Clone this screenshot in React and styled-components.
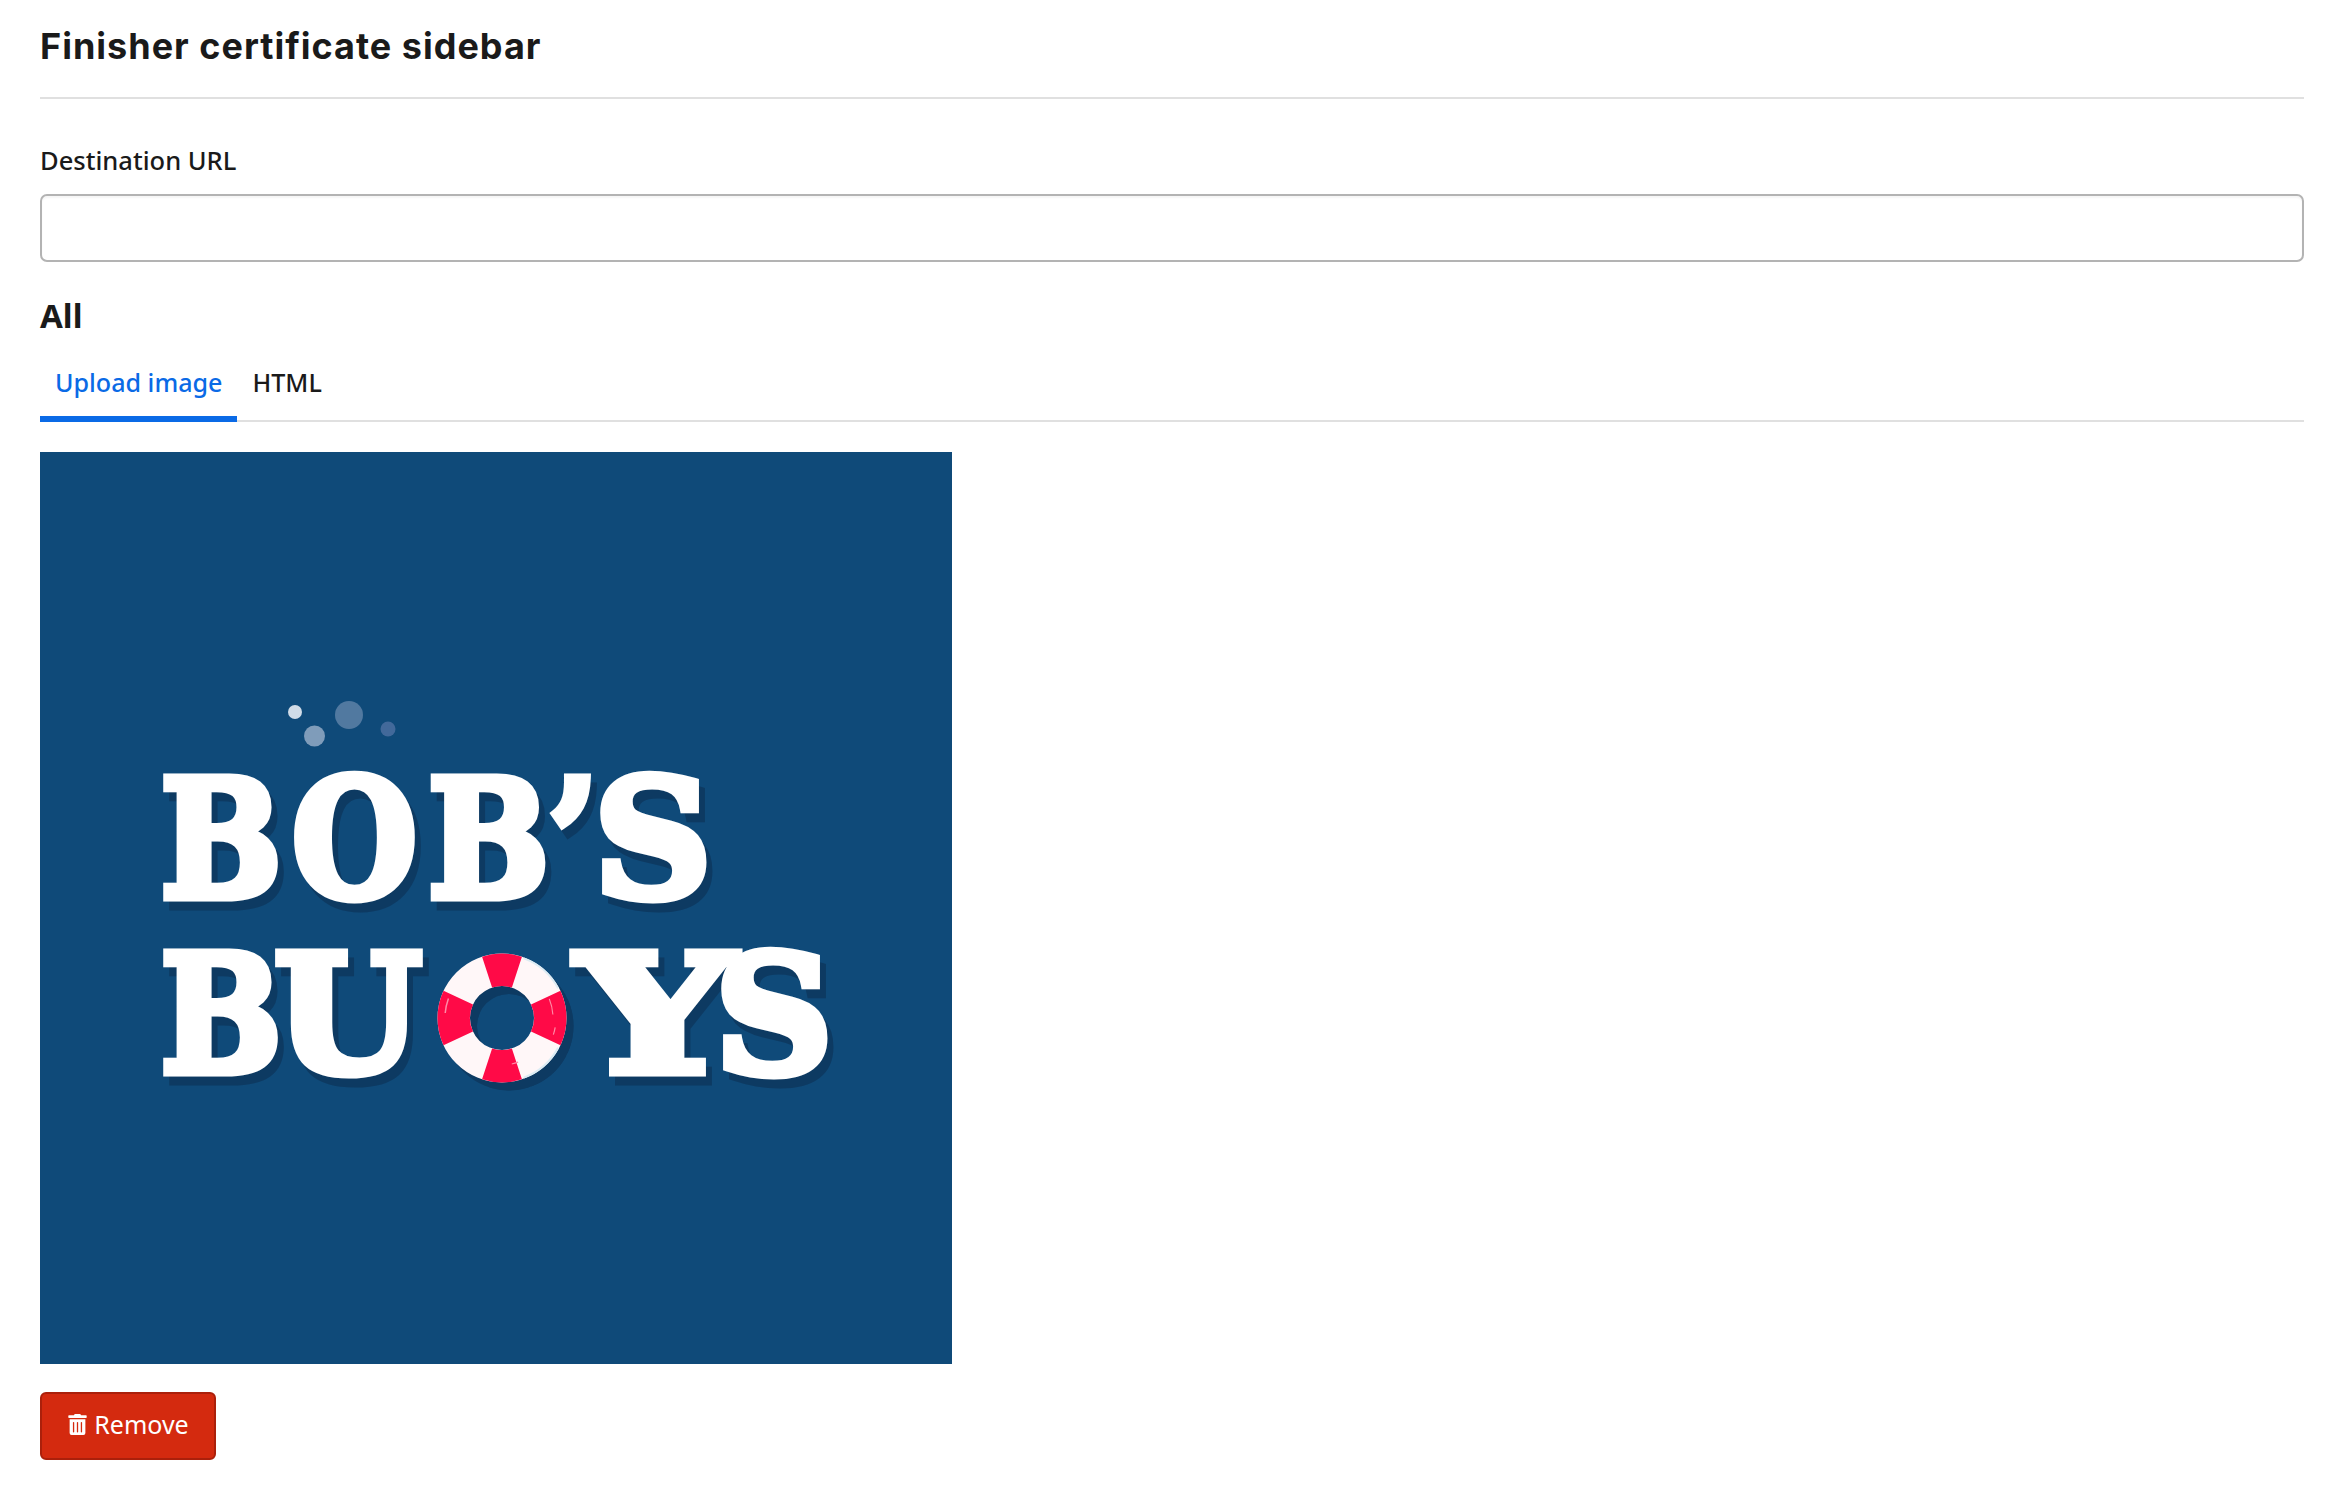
import React from "react";
import styled, { createGlobalStyle } from "styled-components";
import { FaTrashAlt } from "react-icons/fa";

const Global = createGlobalStyle`
  html, body { margin: 0; padding: 0; background: #fff; }
  body { font-family: "Noto Sans", "Open Sans", sans-serif; color: #1a1a1a; }
`;

const Page = styled.main`
  width: 2338px;
  box-sizing: border-box;
  padding: 0 34px 0 40px;
`;

const TitleBar = styled.header`
  height: 99px;
  box-sizing: border-box;
  border-bottom: 2px solid #e0e0e0;
  display: flex;
  align-items: center;
  padding-bottom: 5px;
  margin-bottom: 42px;
`;

const Title = styled.h1`
  margin: 0;
  font-family: "Inter", sans-serif;
  font-size: 36px;
  line-height: 44px;
  font-weight: 700;
  letter-spacing: 1px;
  color: #1a1a1a;
`;

const Field = styled.div`
  display: flex;
  flex-direction: column;
  gap: 15px;
`;

const Label = styled.label`
  font-size: 25.5px;
  line-height: 38px;
  font-weight: 500;
  color: #1a1a1a;
`;

const UrlInput = styled.input`
  display: block;
  width: 100%;
  height: 68px;
  box-sizing: border-box;
  border: 2px solid #b3b3b3;
  border-radius: 7px;
  background: #fff;
  box-shadow: inset 0 2px 2px rgba(0, 0, 0, 0.04);
`;

const SectionTitle = styled.h2`
  margin: 33px 0 0;
  font-size: 33px;
  line-height: 42px;
  font-weight: 700;
  color: #1a1a1a;
`;

const Tabs = styled.nav`
  display: flex;
  margin-top: 12px;
  border-bottom: 2px solid #e0e0e0;
  height: 71px;
  box-sizing: content-box;
`;

const Tab = styled.button`
  appearance: none;
  background: none;
  border: 0;
  margin: 0 0 -2px;
  padding: 0 15px 2px;
  height: 73px;
  box-sizing: border-box;
  font-family: inherit;
  font-size: 25.1px;
  font-weight: 500;
  color: ${(p) => (p.$active ? "#0a6ae6" : "#1a1a1a")};
  border-bottom: 6px solid ${(p) => (p.$active ? "#0a6ae6" : "transparent")};
`;

const LogoFrame = styled.figure`
  margin: 30px 0 0;
  width: 912px;
  height: 912px;
  background: #0f4a79;
`;

const LogoSvg = styled.svg`
  display: block;
  width: 100%;
  height: 100%;
`;

const Wordmark = styled.g`
  filter: drop-shadow(6px 9px 0 #0d3a62);
`;

const LogoWord = styled.text`
  font-family: "DejaVu Serif", serif;
  font-weight: 700;
  font-size: 163px;
  fill: #fff;
  stroke: #fff;
  stroke-width: 9px;
  stroke-linejoin: miter;
`;

const BuoyGroup = styled.g`
  filter: drop-shadow(7px 8px 0 #0d3a62);
`;

const RemoveButton = styled.button`
  display: flex;
  align-items: center;
  justify-content: center;
  gap: 6px;
  margin-top: 28px;
  width: 176px;
  height: 68px;
  box-sizing: border-box;
  background: #d42a0f;
  border: 2px solid #ab200b;
  border-radius: 6px;
  color: #fff;
  font-family: inherit;
  font-size: 25px;
  font-weight: 400;
  padding: 0 0 4px;
`;

const polar = (r, deg) => {
  const a = ((deg - 90) * Math.PI) / 180;
  return [r * Math.cos(a), r * Math.sin(a)];
};

const sector = (from, to, outer = 64.5, inner = 32) => {
  const [x1, y1] = polar(outer, from);
  const [x2, y2] = polar(outer, to);
  const [x3, y3] = polar(inner, to);
  const [x4, y4] = polar(inner, from);
  return `M${x1} ${y1}A${outer} ${outer} 0 0 1 ${x2} ${y2}L${x3} ${y3}A${inner} ${inner} 0 0 0 ${x4} ${y4}Z`;
};

const arc = (r, from, to) => {
  const [x1, y1] = polar(r, from);
  const [x2, y2] = polar(r, to);
  return `M${x1} ${y1}A${r} ${r} 0 0 1 ${x2} ${y2}`;
};

const Buoy = () => (
  <BuoyGroup transform="translate(462 566)">
    <path d={sector(0, 179.99)} fill="#fff7f8" />
    <path d={sector(180, 359.99)} fill="#fff7f8" />
    <path d={arc(63.5, 20, 62)} fill="none" stroke="#dcecf4" strokeWidth="2" />
    <path d={arc(63.5, 118, 160)} fill="none" stroke="#dcecf4" strokeWidth="2" />
    {[[-18, 18], [65, 115], [162, 198], [245, 295]].map(([a, b]) => (
      <path key={a} d={sector(a, b)} fill="#ff0a47" />
    ))}
    <path d={arc(57, 275, 290)} fill="none" stroke="#ff8aa6" strokeWidth="1.5" />
    <path d={arc(51, 68, 86)} fill="none" stroke="#ff8aa6" strokeWidth="1.2" />
    <path d={arc(54, 100, 108)} fill="none" stroke="#ff8aa6" strokeWidth="1.2" />
    <path d={arc(47, 160, 168)} fill="none" stroke="#ff8aa6" strokeWidth="1.2" />
  </BuoyGroup>
);

const Logo = () => (
  <LogoSvg viewBox="0 0 912 912" role="img" aria-label="Bob's Buoys">
    <circle cx="255" cy="260" r="7" fill="#d0dce8" />
    <circle cx="309" cy="263" r="14" fill="#5179a0" />
    <circle cx="274.5" cy="284" r="10.5" fill="#7f9cba" />
    <circle cx="348" cy="277" r="7.5" fill="#42699a" />
    <Wordmark>
      <g transform="scale(0.88 1)">
        <LogoWord x="137 286.5 441 577.6" y="445">BOB’</LogoWord>
        <LogoWord x="137" y="620.5">B</LogoWord>
      </g>
      <g transform="scale(1.04 1)">
        <LogoWord x="225" y="620.5">U</LogoWord>
      </g>
      <g transform="scale(1.35 1)">
        <LogoWord x="398" y="620.5">Y</LogoWord>
      </g>
      <LogoWord x="554" y="445">S</LogoWord>
      <LogoWord x="675" y="620.5">S</LogoWord>
    </Wordmark>
    <Buoy />
  </LogoSvg>
);

export default function App() {
  return (
    <Page>
      <Global />
      <TitleBar>
        <Title>Finisher certificate sidebar</Title>
      </TitleBar>
      <Field>
        <Label htmlFor="destination-url">Destination URL</Label>
        <UrlInput id="destination-url" type="text" />
      </Field>
      <SectionTitle>All</SectionTitle>
      <Tabs>
        <Tab $active>Upload image</Tab>
        <Tab>HTML</Tab>
      </Tabs>
      <LogoFrame>
        <Logo />
      </LogoFrame>
      <RemoveButton>
        <FaTrashAlt size={21} />
        Remove
      </RemoveButton>
    </Page>
  );
}
